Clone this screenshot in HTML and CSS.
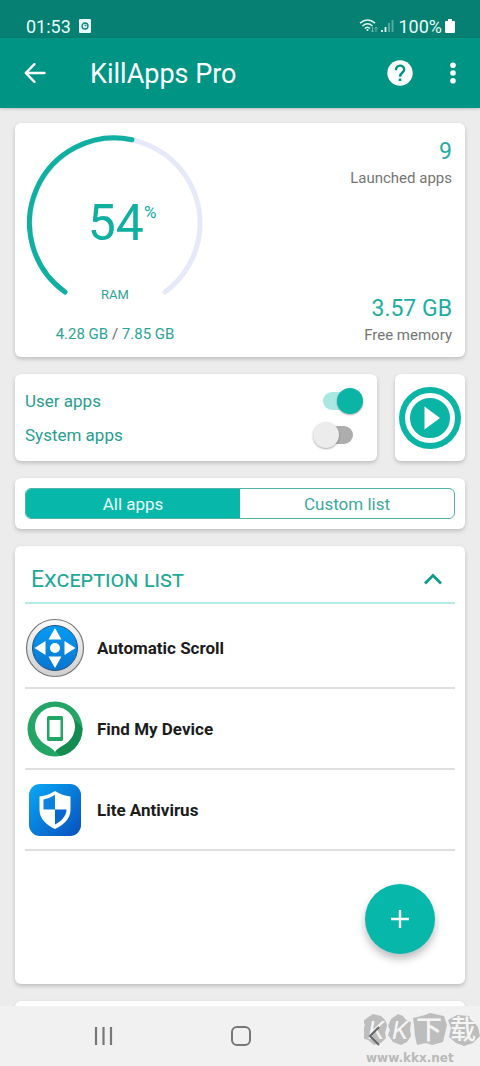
FILE: index.html
```html
<!DOCTYPE html>
<html lang="en">
<head>
<meta charset="utf-8">
<meta name="viewport" content="width=device-width, initial-scale=1">
<title>KillApps Pro</title>
<link rel="stylesheet" href="styles.css">
</head>
<body>
<div class="screen">
  <div class="status">
    <span class="status-time">01:53</span>
    <svg class="status-note" width="12" height="14" viewBox="0 0 12 14"><rect width="12" height="14" rx="1" fill="#e9fbf8"/><circle cx="6" cy="7" r="3" fill="none" stroke="#058072" stroke-width="1.3"/><path d="M6 5.5V7l1.5-.6" fill="none" stroke="#058072"/></svg>
    <span class="status-right">
      <svg width="36" height="16" viewBox="0 0 36 16" fill="none" stroke="#dff6f2" stroke-width="1.6"><path d="M1 5.2Q8.500-1.200 16 5.200M3.500 8Q8.500 3.500 13.500 8M5.800 10.500Q8.500 8 11 10.500"/><circle cx="8.500" cy="12" r="1.100" fill="#dff6f2" stroke="none"/><path d="M13.500 9v5M12 12.500l1.500 1.500 1.500-1.500M17 14V9M15.500 10.500L17 9l1.500 1.500" stroke="#6bb8ad" stroke-width="1"/><path d="M23 14v-2M26.500 14V9" stroke-width="1.800"/><path d="M30 14V5M33.500 14V2" stroke="#5bada2" stroke-width="1.800"/></svg>
      <span>100%</span>
      <svg width="10" height="14" viewBox="0 0 10 14" fill="#fff"><path d="M3 0h4v2h2q1 0 1 1v10q0 1-1 1H1q-1 0-1-1V3q0-1 1-1h2z"/></svg>
    </span>
  </div>
  <header class="appbar">
    <button class="icon-btn" aria-label="Back"><svg width="22" height="22" viewBox="0 0 22 22" fill="none" stroke="#fff" stroke-width="2.400" stroke-linecap="round" stroke-linejoin="round"><path d="M20.500 11H2M10.500 2.200L1.700 11l8.800 8.800"/></svg></button>
    <h1 class="title">KillApps Pro</h1>
    <button class="icon-btn" aria-label="Help"><svg width="26" height="26" viewBox="0 0 26 26"><circle cx="13" cy="13" r="12.700" fill="#fff"/><path d="M8.900 10.200C8.900 4.200 17.200 4.200 17.200 9.700 17.200 12.500 13 12.700 13 16.700" fill="none" stroke="#009485" stroke-width="2.400"/><rect x="11.700" y="18.500" width="2.600" height="2.600" fill="#009485"/></svg></button>
    <button class="icon-btn" aria-label="More options"><svg width="6" height="22" viewBox="0 0 6 22" fill="#fff"><circle cx="3" cy="3.200" r="2.800"/><circle cx="3" cy="11" r="2.800"/><circle cx="3" cy="18.800" r="2.800"/></svg></button>
  </header>
  <main class="content">
    <section class="card memory">
      <div class="ram">
        <div class="gauge">
          <svg class="gauge-ring" viewBox="0 0 176 176" fill="none" stroke-width="5" stroke-linecap="round"><path d="M38 157A85 85 0 1 1 138 157" stroke="#e5e9f9"/><path d="M38 157A85 85 0 0 1 105 4.700" stroke="#0fb0a2"/></svg>
          <div class="gauge-value">54<sup>%</sup></div>
          <div class="gauge-label">RAM</div>
        </div>
        <div class="ram-usage">4.28 GB <span>/</span> 7.85 GB</div>
      </div>
      <div class="stats">
        <div><div class="stat-value">9</div><div class="stat-label">Launched apps</div></div>
        <div><div class="stat-value">3.57 GB</div><div class="stat-label">Free memory</div></div>
      </div>
    </section>
    <div class="run-row">
      <section class="card toggles">
        <label class="toggle">User apps<input class="switch" type="checkbox" role="switch" checked></label>
        <label class="toggle">System apps<input class="switch" type="checkbox" role="switch"></label>
      </section>
      <button class="card run" aria-label="Close apps"><svg width="64" height="64" viewBox="0 0 64 64"><circle cx="32" cy="32" r="31" fill="#0ab5a6"/><circle cx="32" cy="32" r="22.500" fill="#0ab5a6" stroke="#fff" stroke-width="5"/><path d="M26.500 20.500v23L42 32z" fill="#fff"/></svg></button>
    </div>
    <section class="card tabs-card">
      <div class="tabs">
        <button class="tab tab-active">All apps</button>
        <button class="tab">Custom list</button>
      </div>
    </section>
    <section class="card exceptions">
      <button class="list-head"><span>Exception list</span><svg width="20" height="12" viewBox="0 0 20 12" fill="none" stroke="#109a8b" stroke-width="2.800"><path d="M2 10.500L10 2.500l8 8"/></svg></button>
      <ul class="apps">
        <li class="app">
          <svg width="60" height="60" viewBox="0 0 60 60"><defs><linearGradient id="metal" x2="0" y2="1"><stop stop-color="#fafafa"/><stop offset="1" stop-color="#cfcfcf"/></linearGradient><linearGradient id="sky" x2="0" y2="1"><stop stop-color="#079cf5"/><stop offset="1" stop-color="#0875d0"/></linearGradient></defs><circle cx="30" cy="30" r="28.500" fill="url(#metal)" stroke="#777" stroke-width="1.200"/><circle cx="30" cy="30" r="22.500" fill="url(#sky)" stroke="#28517a" stroke-width="1"/><g fill="#fff"><circle cx="30" cy="30" r="5"/><path d="M30 10l6.500 11.500h-13zM30 50l6.500-11.500h-13zM9.500 30L20.500 23v14zM50.500 30L39.500 23v14z"/></g></svg>
          <span>Automatic Scroll</span>
        </li>
        <li class="app">
          <svg width="60" height="60" viewBox="0 0 60 60"><defs><clipPath id="disc"><circle cx="30" cy="30" r="27.500"/></clipPath></defs><circle cx="30" cy="30" r="27.500" fill="#23a566"/><path d="M44 15L58 29V48L40 60 30 52z" fill="#168b51" clip-path="url(#disc)"/><path d="M30 53C27 48 21 47 16.500 42.500A20 20 0 1 1 43.500 42.500C39 47 33 48 30 53z" fill="#fff"/><rect x="22" y="17" width="16" height="25" rx="1.500" fill="#23a566"/><rect x="24.500" y="21" width="11" height="17" fill="#fff"/></svg>
          <span>Find My Device</span>
        </li>
        <li class="app">
          <svg width="60" height="60" viewBox="0 0 60 60"><defs><linearGradient id="blue" x2="1" y2="1"><stop stop-color="#0aa9f5"/><stop offset="1" stop-color="#074fbd"/></linearGradient></defs><rect x="4" y="4" width="52" height="52" rx="11" fill="url(#blue)"/><path d="M30 11Q37 15.500 45.500 16.500V30C45.500 39 38 45.500 30 49C22 45.500 14.500 39 14.500 30V16.500Q23 15.500 30 11z" fill="#fff"/><path d="M30 15v14.500H18.500V19.500Q24 18.500 30 15z" fill="#0c83de"/><path d="M30 29.500h11.500C41.500 36 36 41.500 30 44.500z" fill="#0868cf"/></svg>
          <span>Lite Antivirus</span>
        </li>
      </ul>
      <button class="add" aria-label="Add app"><svg width="18" height="18" viewBox="0 0 18 18" stroke="#fff" stroke-width="2.400"><path d="M9 0v18M0 9h18"/></svg></button>
    </section>
    <section class="card next"></section>
  </main>
  <nav class="nav">
    <button class="nav-btn" aria-label="Recents"><svg width="20" height="20" viewBox="0 0 20 20" stroke="#777" stroke-width="2.200"><path d="M2 1v18M9.500 1v18M17 1v18"/></svg></button>
    <button class="nav-btn" aria-label="Home"><svg width="22" height="22" viewBox="0 0 22 22"><rect x="2" y="2" width="18" height="18" rx="5" fill="none" stroke="#777" stroke-width="2"/></svg></button>
    <button class="nav-btn" aria-label="Back"><svg width="12" height="20" viewBox="0 0 12 20" fill="none" stroke="#666" stroke-width="2"><path d="M11 1L2 10l9 9"/></svg></button>
    <div class="watermark">
      <div class="mark">
        <svg class="mark-bg" viewBox="0 0 116 34" fill="#bdbdbd"><path d="M3 5L9 1l8 2 5 5 1 5-2 7 1 5-5 5-7 2-6-5-6-2 1-8 2-5-2-4zM27 6l7-5 5 2 3 4 5 2-1 8 1 6-4 6-6 3-8-3-5-7 2-5-2-4zM49 5l12-3 5-2 14 3 3 9-4 17-11 3-6-2-9 2-2-9-1-11zM84 7l9-5 12 1 4 5 5 6 2 9-7 7-9 3-8-3-7-6 2-9z"/></svg>
        <span>K</span><span>K</span><span class="han">下</span><span class="han">载</span>
      </div>
      <div class="site">www.kkx.net</div>
    </div>
  </nav>
</div>
</body>
</html>
```
FILE: styles.css
```css
* { box-sizing: border-box; }
body { margin: 0; font-family: Roboto, "Noto Sans CJK SC", sans-serif; color: #1c1c1c; }
button { margin: 0; padding: 0; border: 0; background: none; font: inherit; color: inherit; }
svg { display: block; flex: none; }
.screen { display: flex; flex-direction: column; height: 100vh; background: #ececec; }

.status { display: flex; align-items: center; gap: 8px; padding: 14px 25px 0 26px; height: 38px; flex: none; background: #058072; color: #e9fbf8; font-size: 18px; }
.status-right { display: flex; align-items: center; gap: 3px; margin-left: auto; }
.appbar { display: flex; align-items: center; height: 70px; flex: none; padding: 0 24px; background: #009485; color: #fff; box-shadow: 0 1px 3px #0003; }
.title { flex: 1; margin: 0 0 0 44px; padding-top: 2px; font-size: 27px; font-weight: 400; line-height: 32px; }
.icon-btn + .icon-btn { margin-left: 37px; }

.content { flex: 1; min-height: 0; overflow: hidden; display: flex; flex-direction: column; gap: 17px; padding: 15px 15px 0; }
.card { flex: none; background: #fff; border-radius: 6px; box-shadow: 0 2px 4px #0003; }

.memory { display: flex; justify-content: space-between; padding: 12px 13px 13px 12px; }
.ram { width: 176px; color: #2ba595; text-align: center; }
.gauge { display: grid; grid-template-rows: 145px 31px; justify-items: center; }
.gauge-ring { grid-area: 1 / 1 / 3 / 2; width: 176px; height: 176px; }
.gauge-value { grid-area: 1 / 1; align-self: end; display: flex; margin: 0 0 29px 14px; font-size: 50px; line-height: 56px; color: #0fb0a2; }
.gauge-value sup { margin-top: 7px; font-size: 17px; line-height: 20px; }
.gauge-label { grid-area: 2 / 1; font-size: 13px; line-height: 30px; }
.ram-usage { padding-top: 13px; font-size: 15px; line-height: 20px; }
.ram-usage span { color: #666; }
.stats { display: flex; flex-direction: column; justify-content: space-between; text-align: right; }
.stat-value { font-size: 23px; line-height: 34px; color: #1fada0; }
.stat-label { font-size: 15px; line-height: 18px; color: #757575; }

.run-row { display: flex; gap: 18px; }
.toggles { flex: 1; display: flex; flex-direction: column; padding: 10px 14px 9px 10px; }
.toggle { display: flex; justify-content: space-between; align-items: center; height: 34px; font-size: 17px; color: #299e8f; }
.switch { appearance: none; position: relative; width: 50px; height: 26px; margin: 0; }
.switch::before { content: ""; position: absolute; inset: 4px 10px; border-radius: 9px; background: #adadad; }
.switch::after { content: ""; position: absolute; top: 0; left: 0; width: 26px; height: 26px; border-radius: 50%; background: #ececec; box-shadow: 0 1px 2px #0005; }
.switch:checked::before { background: #a9e8e1; }
.switch:checked::after { left: auto; right: 0; background: #0ab5a6; }
.run { display: grid; place-items: center; width: 70px; }

.tabs-card { padding: 10px; }
.tabs { display: flex; border: 1px solid #4fb3a7; border-radius: 6px; overflow: hidden; }
.tab { flex: 1; height: 29px; padding-top: 1px; font-size: 17px; line-height: 28px; color: #3ba99b; }
.tab-active { background: #07b8aa; color: #e9fbf8; }

.exceptions { display: flex; flex-direction: column; padding: 10px 10px 30px; }
.list-head { display: flex; justify-content: space-between; align-items: center; height: 48px; padding: 0 12px 0 6px; border-bottom: 2px solid #b5ebe5; font-size: 23px; font-variant: small-caps; color: #1ea898; }
.apps { margin: 0; padding: 4px 0 0; list-style: none; }
.app { display: flex; align-items: center; gap: 12px; height: 81px; border-bottom: 2px solid #e0e0e0; font-size: 17px; font-weight: 700; }
.add { display: grid; place-items: center; align-self: flex-end; width: 70px; height: 70px; margin: 33px 20px 0; border-radius: 50%; background: #07b8aa; box-shadow: 0 5px 8px #0004; }
.next { height: 80px; }

.nav { position: relative; flex: none; display: flex; align-items: center; justify-content: space-between; height: 60px; padding: 0 100px 0 94px; background: #f1f1f1; }
.nav-btn { position: relative; z-index: 1; }
.watermark { position: absolute; right: 0; top: 7px; width: 116px; color: #b9b9b9; }
.mark { position: relative; display: grid; grid-template-columns: 24px 24px 34px 34px; justify-items: center; height: 34px; color: #f5f5f5; font-size: 26px; line-height: 34px; font-style: italic; }
.mark span { position: relative; }
.mark .han { font-style: normal; font-weight: 500; }
.mark-bg { position: absolute; inset: 0; }
.site { padding-left: 2px; font: bold 12px/22px "DejaVu Sans", sans-serif; }
```
